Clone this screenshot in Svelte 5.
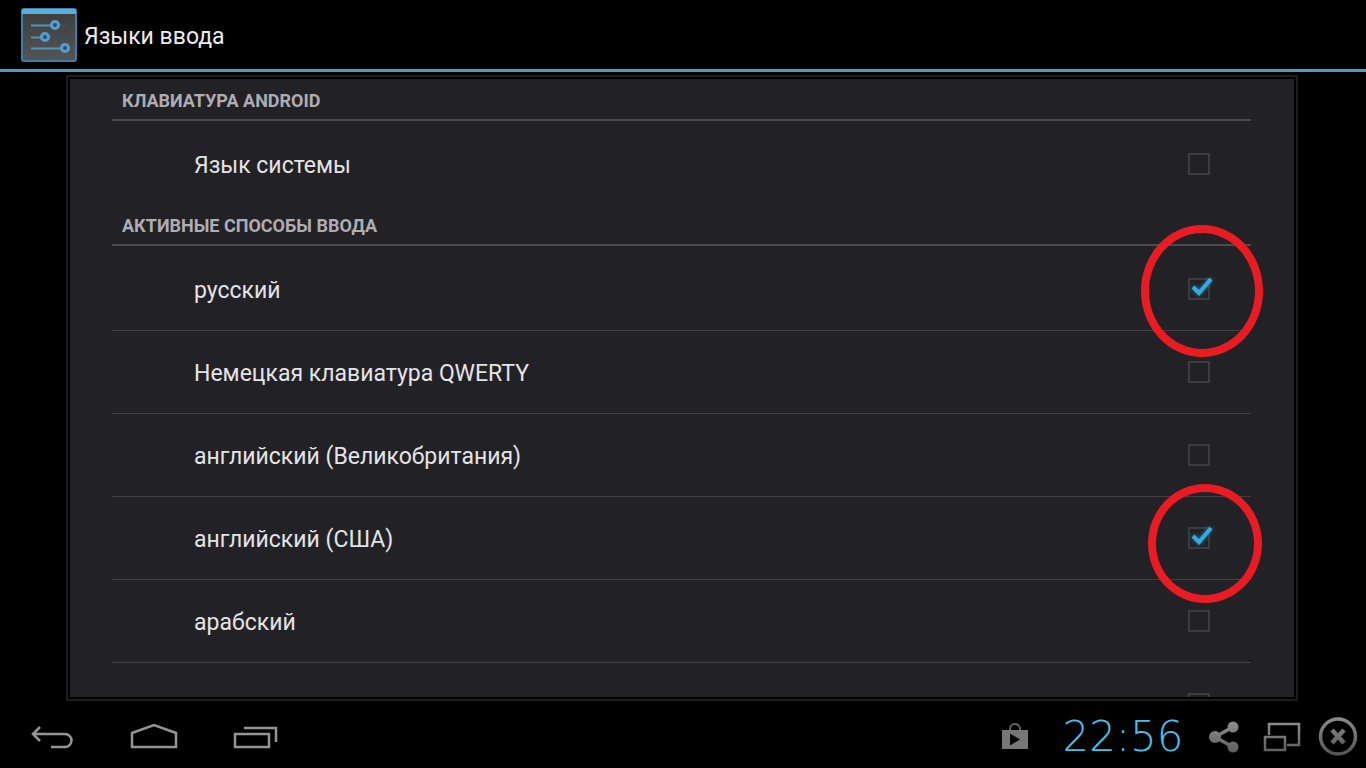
<script lang="ts">
  let systemLanguage = $state(false);

  let methods = $state([
    { id: "ru", name: "русский", active: true, mark: "large" },
    { id: "de", name: "Немецкая клавиатура QWERTY", active: false, mark: "" },
    { id: "en-gb", name: "английский (Великобритания)", active: false, mark: "" },
    { id: "en-us", name: "английский (США)", active: true, mark: "small" },
    { id: "ar", name: "арабский", active: false, mark: "" },
    { id: "next", name: "", active: false, mark: "" }
  ]);
</script>

<div class="screen">
  <header class="header">
    <svg class="logo" viewBox="0 0 56 54" width="56" height="54" aria-hidden="true">
      <defs>
        <linearGradient id="plate" x1="0" y1="0" x2="0" y2="1">
          <stop offset="0" stop-color="#3c3c3c" />
          <stop offset="1" stop-color="#555" />
        </linearGradient>
      </defs>
      <rect x="1" y="1" width="54" height="52" rx="2" fill="url(#plate)" stroke="#397fab" stroke-width="2" />
      <path d="M1 2q0-1 1-1h52q1 0 1 1v4H1z" fill="#5aaeda" />
      <path d="M10 17.500h22M10 29.500h13M10 40.500h33" stroke="#4c93c0" stroke-width="2" />
      <path d="M38 17.500h9M28 29.500h19" stroke="#2e526e" stroke-width="2" />
      <g fill="#254f70" stroke="#589dc8" stroke-width="3.200">
        <circle cx="34" cy="17" r="3.500" />
        <circle cx="24" cy="29" r="3.500" />
        <circle cx="44" cy="40" r="3.500" />
      </g>
    </svg>
    <h1>Языки ввода</h1>
  </header>

  <main class="frame">
    <div class="panel">
      <h2>КЛАВИАТУРА ANDROID</h2>
      <label class="row system">
        <span class="name">Язык системы</span>
        <span class="check">
          <input type="checkbox" bind:checked={systemLanguage} />
        </span>
      </label>

      <h2>АКТИВНЫЕ СПОСОБЫ ВВОДА</h2>
      <div class="methods">
        {#each methods as method (method.id)}
          <label class="row">
            <span class="name">{method.name}</span>
            <span class="check">
              <input type="checkbox" bind:checked={method.active} />
              {#if method.active}
                <svg class="tick" viewBox="0 0 26 24" width="26" height="24" aria-hidden="true">
                  <path d="M5 11l6 6L23 3" />
                </svg>
              {/if}
              {#if method.mark}
                <span class="mark {method.mark}"></span>
              {/if}
            </span>
          </label>
        {/each}
      </div>
    </div>
  </main>

  <footer class="bar">
    <nav class="nav">
      <button type="button" aria-label="Назад">
        <svg viewBox="0 0 48 30" width="48" height="30" stroke-width="2.500">
          <path d="M5 11h32a6.500 6.500 0 0 1 0 13H23M12 4l-7 7 7 7" />
        </svg>
      </button>
      <button type="button" aria-label="Главный экран">
        <svg viewBox="0 0 48 30" width="48" height="30" stroke-width="2.500">
          <path d="M2 24V10L24 2l22 8v14z" />
        </svg>
      </button>
      <button type="button" aria-label="Недавние приложения">
        <svg viewBox="0 0 48 30" width="48" height="30" stroke-width="2.500">
          <path d="M3 11h34v13H3zM12 5h32v14" />
        </svg>
      </button>
    </nav>

    <div class="status">
      <svg class="bag" viewBox="0 0 26 28" width="26" height="28" aria-hidden="true">
        <path d="M8 8V6a5 5 0 0 1 10 0v2" fill="none" stroke="#666" stroke-width="2" />
        <path d="M0 7h26v19H0z" fill="#777" />
        <path d="M8 10.500v12l10-6z" fill="#080808" />
      </svg>
      <time class="clock">22:56</time>
      <button type="button" aria-label="Поделиться">
        <svg viewBox="0 0 32 32" width="32" height="32">
          <defs>
            <linearGradient id="metal" gradientUnits="userSpaceOnUse" x1="0" y1="0" x2="0" y2="38">
              <stop offset="0" stop-color="#8e8e8e" />
              <stop offset="1" stop-color="#555" />
            </linearGradient>
          </defs>
          <path d="M25 6L7 16l18 10" fill="none" stroke="url(#metal)" stroke-width="3.500" />
          <g fill="url(#metal)">
            <circle cx="25" cy="6" r="5.500" />
            <circle cx="7" cy="16" r="6" />
            <circle cx="25" cy="26" r="5.500" />
          </g>
        </svg>
      </button>
      <button type="button" aria-label="Окна">
        <svg viewBox="0 0 38 32" width="38" height="32">
          <path d="M6 14V3h30v21H24" fill="none" stroke="url(#metal)" stroke-width="2.500" />
          <path d="M2 16h20v13H2z" fill="none" stroke="url(#metal)" stroke-width="2.500" />
        </svg>
      </button>
      <button type="button" aria-label="Закрыть">
        <svg viewBox="0 0 40 40" width="40" height="40">
          <circle cx="20" cy="19.500" r="17.500" fill="none" stroke="url(#metal)" stroke-width="3.500" />
          <path d="M14 13l12 13M26 13L14 26" fill="none" stroke="url(#metal)" stroke-width="4.500" />
        </svg>
      </button>
    </div>
  </footer>
</div>

<style>
  :global(body) {
    margin: 0;
    background: #000;
  }

  .screen {
    display: flex;
    flex-direction: column;
    height: 100vh;
    overflow: hidden;
    background: #000;
    color: #e4e4e6;
    font-family: Roboto, "Liberation Sans", sans-serif;
    font-size: 23px;
  }

  .header {
    display: flex;
    align-items: center;
    gap: 7px;
    box-sizing: border-box;
    height: 72px;
    padding: 0 21px;
    border-bottom: 3px solid #4a9cc0;
  }

  .logo {
    display: block;
  }

  h1 {
    margin: 0;
    padding-top: 4px;
    font-size: 23px;
    font-weight: 400;
    color: #ececec;
  }

  .frame {
    flex: 1;
    display: flex;
    min-height: 0;
    margin: 3px 68px 0 66px;
    padding: 2px;
    border: 2px solid #1d1d1e;
  }

  .panel {
    flex: 1;
    padding: 0 43px 0 42px;
    overflow: hidden;
    background: #222126;
  }

  h2 {
    box-sizing: border-box;
    height: 42px;
    margin: 0;
    padding: 2px 10px 0;
    border-bottom: 2px solid #4b4a4e;
    font-size: 18px;
    font-weight: 700;
    line-height: 40px;
    color: #aeadb2;
  }

  .methods {
    padding-top: 2px;
  }

  .row {
    display: flex;
    align-items: center;
    justify-content: space-between;
    box-sizing: border-box;
    height: 83px;
    padding: 0 41px 0 82px;
    border-bottom: 1px solid #414045;
  }

  .row.system {
    padding-top: 4px;
    border-bottom-color: transparent;
  }

  .name {
    padding-top: 2px;
  }

  .check {
    position: relative;
    display: flex;
  }

  input {
    appearance: none;
    box-sizing: border-box;
    width: 22px;
    height: 22px;
    margin: 0;
    border: 2px solid #3c3b3f;
    background: transparent;
  }

  .tick {
    position: absolute;
    left: 0;
    top: -2px;
    fill: none;
    stroke: #35addb;
    stroke-width: 4;
    filter: drop-shadow(0 0 2px #1582ad);
  }

  .mark {
    position: absolute;
    box-sizing: border-box;
    border: 8px solid #e91c24;
    border-radius: 50%;
    pointer-events: none;
  }

  .mark.large {
    left: -47px;
    top: -53px;
    width: 122px;
    height: 132px;
  }

  .mark.small {
    left: -40px;
    top: -43px;
    width: 114px;
    height: 119px;
  }

  .bar {
    display: flex;
    align-items: center;
    justify-content: space-between;
    box-sizing: border-box;
    height: 67px;
    padding: 4px 8px 0 28px;
  }

  .nav {
    display: flex;
    gap: 54px;
    padding-top: 2px;
  }

  .nav svg {
    fill: none;
    stroke: #949494;
  }

  button {
    padding: 0;
    border: 0;
    background: none;
  }

  button svg {
    display: block;
  }

  .status {
    display: flex;
    align-items: center;
  }

  .clock {
    width: 132px;
    margin: 0 19px 0 29px;
    font-family: "DejaVu Sans", sans-serif;
    font-size: 42px;
    font-weight: 200;
    line-height: 40px;
    text-align: center;
    color: #45c0ea;
  }

  .status button {
    margin-right: 23px;
  }

  .status button:nth-last-child(2) {
    margin-right: 17px;
  }

  .status button:last-child {
    margin-right: 0;
  }
</style>
